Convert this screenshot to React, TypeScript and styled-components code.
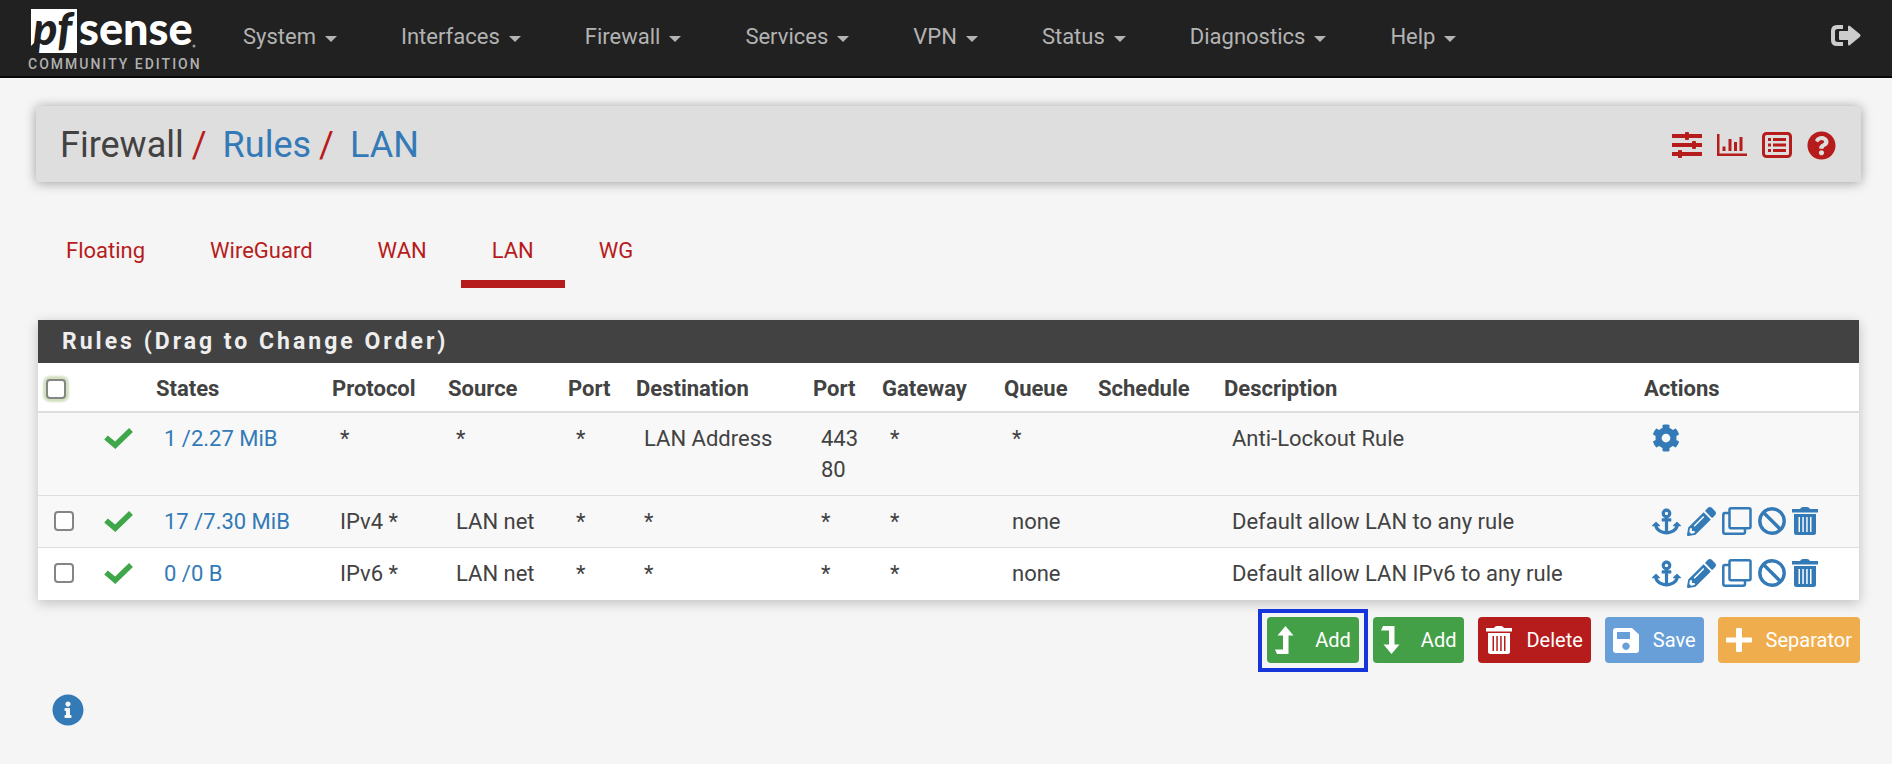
import React from 'react';
import styled, { createGlobalStyle, css } from 'styled-components';
import { FaAnchor, FaCog, FaInfoCircle, FaPencilAlt, FaQuestionCircle } from 'react-icons/fa';

const colors = {
  page: '#f5f5f5',
  nav: '#212121',
  navText: '#b3b3b3',
  red: '#b71c1c',
  blue: '#337ab7',
  green: '#43a047',
  text: '#424242',
  line: '#dddddd',
};

const GlobalStyle = createGlobalStyle`
  *, *::before, *::after { box-sizing: border-box; }
  body {
    margin: 0;
    background: ${colors.page};
    color: ${colors.text};
    font: 400 22px/31px Roboto, "Liberation Sans", sans-serif;
  }
  a { color: ${colors.blue}; text-decoration: none; }
  svg { display: block; flex: none; }
`;

/* ---------- top navigation ---------- */

const Navbar = styled.nav`
  display: flex;
  align-items: flex-start;
  height: 78px;
  padding: 0 31px 0 25px;
  background: ${colors.nav};
  border-bottom: 2px solid #080808;
`;

const Brand = styled.a`
  margin-right: 9px;
`;

const BrandText = styled.text<{ $dark?: boolean }>`
  font: 900 45px Lato, sans-serif;
  font-style: ${p => (p.$dark ? 'italic' : 'normal')};
  fill: ${p => (p.$dark ? colors.nav : '#ffffff')};
`;

const EditionText = styled.text`
  font: 500 14px Roboto, sans-serif;
  letter-spacing: 2px;
  fill: #b0b0b0;
`;

const Menu = styled.ul`
  display: flex;
  flex: 1;
  margin: 0;
  padding: 0;
  list-style: none;
`;

const MenuButton = styled.button`
  display: flex;
  align-items: center;
  gap: 9px;
  padding: 21px 32px 20px;
  border: 0;
  background: none;
  color: ${colors.navText};
  font: inherit;
  cursor: pointer;

  &::after {
    content: '';
    margin-top: 4px;
    border: 6px solid transparent;
    border-top-color: currentColor;
    border-bottom: 0;
  }
`;

const LogoutLink = styled.a`
  padding-top: 25px;
  color: #cccccc;
`;

/* ---------- page heading ---------- */

const Page = styled.main`
  padding: 28px 33px 38px 38px;
`;

const PageHeader = styled.header`
  display: flex;
  align-items: center;
  justify-content: space-between;
  height: 76px;
  margin: 0 -2px;
  padding: 2px 25px 0 24px;
  background: #dedede;
  border-radius: 3px;
  box-shadow: 0 1px 12px rgba(0, 0, 0, 0.36);
`;

const Breadcrumb = styled.ol`
  display: flex;
  margin: 0;
  padding: 0;
  list-style: none;
  font-size: 36px;
  line-height: 44px;

  li + li::before {
    content: '/';
    padding: 0 16px 0 8px;
    color: ${colors.red};
  }
`;

const HeaderTools = styled.div`
  display: flex;
  align-items: center;
  gap: 15px;

  a { color: ${colors.red}; }
`;

/* ---------- tabs ---------- */

const Tabs = styled.nav`
  display: flex;
  gap: 3px;
  margin: 45px 0 32px;
`;

const Tab = styled.a<{ $active?: boolean }>`
  padding: 8px 31px 14px;
  border-bottom: 8px solid ${p => (p.$active ? colors.red : 'transparent')};
  color: ${colors.red};

  &:first-child { padding-left: 28px; }
`;

/* ---------- rules panel ---------- */

const Panel = styled.section`
  background: #ffffff;
  box-shadow: 0 3px 12px rgba(0, 0, 0, 0.22);
`;

const PanelTitle = styled.h2`
  margin: 0;
  padding: 6px 24px;
  background: ${colors.text};
  color: #eeeeee;
  font-size: 23px;
  font-weight: 700;
  letter-spacing: 3px;
`;

const RulesTable = styled.table`
  width: 100%;
  table-layout: fixed;
  border-collapse: separate;
  border-spacing: 0;
`;

const Col = styled.col<{ $width?: number }>`
  width: ${p => (p.$width ? `${p.$width}px` : 'auto')};
`;

const HeadCell = styled.th`
  padding: 10px 0 7px 8px;
  border-bottom: 2px solid ${colors.line};
  font-weight: 700;
  text-align: left;
  white-space: nowrap;
`;

const Row = styled.tr<{ $shaded?: boolean }>`
  background: ${p => (p.$shaded ? '#f8f8f8' : '#ffffff')};

  td { border-bottom: 1px solid ${colors.line}; }
  &:last-child td { border-bottom-color: transparent; }
`;

const Cell = styled.td`
  padding: 10px 0 10px 16px;
  vertical-align: top;
  white-space: nowrap;
`;

const CellLine = styled.div`
  display: flex;
  align-items: center;
  gap: 6px;
  height: 30px;
`;

const Checkbox = styled.input<{ $glow?: boolean }>`
  display: block;
  appearance: none;
  width: 20px;
  height: 20px;
  margin: 0;
  border: 2px solid #858585;
  border-radius: 4px;
  background: #ffffff;

  ${p => p.$glow && css`
    box-shadow: 0 0 2px 3px #d3e0c0;
  `}

  &:checked { background: ${colors.blue}; }
`;

/* ---------- buttons under the table ---------- */

const ButtonBar = styled.div`
  display: flex;
  justify-content: flex-end;
  gap: 14px;
  margin: 17px -1px 31px 0;
`;

const ActionButton = styled.button<{ $color: string; $marked?: boolean }>`
  position: relative;
  display: flex;
  align-items: center;
  gap: 14px;
  height: 46px;
  padding: 0 8px;
  border: 0;
  border-radius: 4px;
  background: ${p => p.$color};
  color: #ffffff;
  font: 400 20px/28px Roboto, "Liberation Sans", sans-serif;
  cursor: pointer;

  ${p => p.$marked && css`
    &::after {
      content: '';
      position: absolute;
      inset: -8px -9px -9px;
      border: 4px solid #1636dc;
    }
  `}
`;

const InfoButton = styled.button`
  display: block;
  margin-left: 14px;
  padding: 0;
  border: 0;
  background: none;
  color: ${colors.blue};
  cursor: pointer;
`;

/* ---------- icons ---------- */

const Logo = () => (
  <svg width="177" height="76" viewBox="0 0 177 76" role="img" aria-label="pfSense community edition">
    <path d="M6 9H52V53H11L14 38L6 46Z" fill="#ffffff" />
    <BrandText $dark x="8" y="45">pf</BrandText>
    <BrandText x="54" y="45">sense</BrandText>
    <circle cx="169" cy="46" r="1.5" fill="#999999" />
    <EditionText x="3" y="69">COMMUNITY EDITION</EditionText>
  </svg>
);

const SignOutIcon = () => (
  <svg width="30" height="21" viewBox="0 0 30 21" fill="currentColor">
    <path d="M12 0v4H6.500Q4 4 4 6.500v8Q4 17 6.500 17H12v4H6Q0 21 0 15V6Q0 0 6 0z" />
    <path d="M9 6h8V2Q17 -.5 19 1l10 8.300q1 1.200 0 2.400L19 20Q17 21.500 17 19V15H9Q8 15 8 14V7Q8 6 9 6z" />
  </svg>
);

const SlidersIcon = () => (
  <svg width="30" height="26" viewBox="0 0 30 26" fill="currentColor">
    <path d="M0 2h30v4H0zM0 11h30v4H0zM0 20h30v4H0z" />
    <rect x="13" y="0" width="4" height="8" rx="1" />
    <rect x="20" y="9" width="4" height="8" rx="1" />
    <rect x="6" y="18" width="4" height="8" rx="1" />
  </svg>
);

const ChartIcon = () => (
  <svg width="30" height="22" viewBox="0 0 30 22" fill="currentColor">
    <path d="M0 0h2.500v19.500H30V22H0zM5.500 12.500h3V17h-3zM11.500 5h3v12h-3zM17 8h3v9h-3zM22.500 3h3v14h-3z" />
  </svg>
);

const ListIcon = () => (
  <svg width="30" height="26" viewBox="0 0 30 26">
    <rect x="1.500" y="1.500" width="27" height="23" rx="3" fill="none" stroke="currentColor" strokeWidth="3" />
    <path d="M6 6h3v3H6zM6 11.500h3v3H6zM6 17h3v3H6zM11 6h13v3H11zM11 11.500h13v3H11zM11 17h13v3H11z" fill="currentColor" />
  </svg>
);

const CheckIcon = () => (
  <svg width="29" height="21" viewBox="0 0 29 21" role="img" aria-label="pass">
    <path d="M2 9.500L11.200 17.200L27 2" fill="none" stroke="#3fa64a" strokeWidth="5.500" />
  </svg>
);

const CloneIcon = () => (
  <svg width="30" height="28" viewBox="0 0 30 28" fill="none" stroke="currentColor" strokeWidth="2.500">
    <rect x="7.500" y="1.300" width="21" height="20" rx="1.500" />
    <path d="M7.500 6H3Q1.300 6 1.300 8V25Q1.300 26.700 3 26.700H21Q23 26.700 23 25V21.500" />
  </svg>
);

const BanIcon = () => (
  <svg width="28" height="28" viewBox="0 0 28 28" fill="none" stroke="currentColor" strokeWidth="3.400">
    <circle cx="14" cy="14" r="12.200" />
    <path d="M5.500 5.500L22.500 22.500" />
  </svg>
);

const TrashIcon = () => (
  <svg width="26" height="28" viewBox="0 0 26 28" fill="currentColor">
    <path d="M0 2H8Q9 0 11 0H15Q17 0 18 2H26V5.500H0z" />
    <path fillRule="evenodd" d="M2 7H24V25.500Q24 28 21.500 28H4.500Q2 28 2 25.500zM6.500 10V25H8V10zM10.300 10V25H11.800V10zM14.200 10V25H15.700V10zM18 10V25H19.500V10z" />
  </svg>
);

const LevelUpIcon = () => (
  <svg width="26" height="28" viewBox="0 0 26 28" fill="currentColor">
    <path d="M10.500 0L18.500 9.500H13.500V28H2L0 23.500H8V9.500H2.500z" />
  </svg>
);

const LevelDownIcon = () => (
  <svg width="26" height="28" viewBox="0 0 26 28" fill="currentColor">
    <path d="M10.500 28L18.500 18.500H13.500V0H2L0 4.500H8V18.500H2.500z" />
  </svg>
);

const SaveIcon = () => (
  <svg width="26" height="25" viewBox="0 0 26 25" fill="currentColor">
    <path fillRule="evenodd" d="M3 0H19L26 6.500V22Q26 25 23 25H3Q0 25 0 22V3Q0 0 3 0zM4 4V11H17V4zM13 14.500A3.700 3.700 0 1 0 13.010 14.500z" />
  </svg>
);

const PlusIcon = () => (
  <svg width="26" height="26" viewBox="0 0 26 26" fill="currentColor">
    <path d="M11 1h4q1 0 1 1v8.500h9q1 0 1 1v3q0 1-1 1h-9V24q0 1-1 1h-4q-1 0-1-1v-8.500H1q-1 0-1-1v-3q0-1 1-1h9V2q0-1 1-1z" />
  </svg>
);

/* ---------- data ---------- */

const menuItems = ['System', 'Interfaces', 'Firewall', 'Services', 'VPN', 'Status', 'Diagnostics', 'Help'];
const tabs = ['Floating', 'WireGuard', 'WAN', 'LAN', 'WG'];
const headings = ['States', 'Protocol', 'Source', 'Port', 'Destination', 'Port', 'Gateway', 'Queue', 'Schedule', 'Description', 'Actions'];
const columnWidths = [50, 60, 176, 116, 120, 68, 177, 69, 122, 94, 126, undefined, 223];

interface Rule {
  states: string;
  fields: string[][];
  fixed?: boolean;
  shaded?: boolean;
}

const rules: Rule[] = [
  {
    states: '1 /2.27 MiB',
    fields: [['*'], ['*'], ['*'], ['LAN Address'], ['443', '80'], ['*'], ['*'], [], ['Anti-Lockout Rule']],
    fixed: true,
    shaded: true,
  },
  {
    states: '17 /7.30 MiB',
    fields: [['IPv4 *'], ['LAN net'], ['*'], ['*'], ['*'], ['*'], ['none'], [], ['Default allow LAN to any rule']],
    shaded: true,
  },
  {
    states: '0 /0 B',
    fields: [['IPv6 *'], ['LAN net'], ['*'], ['*'], ['*'], ['*'], ['none'], [], ['Default allow LAN IPv6 to any rule']],
  },
];

const RuleActions = ({ fixed }: { fixed?: boolean }) => (
  <CellLine>
    {fixed ? (
      <a href="#settings" aria-label="Settings"><FaCog size={28} /></a>
    ) : (
      <>
        <a href="#toggle" aria-label="Move"><FaAnchor size={29} /></a>
        <a href="#edit" aria-label="Edit"><FaPencilAlt size={29} /></a>
        <a href="#copy" aria-label="Copy"><CloneIcon /></a>
        <a href="#disable" aria-label="Disable"><BanIcon /></a>
        <a href="#delete" aria-label="Delete"><TrashIcon /></a>
      </>
    )}
  </CellLine>
);

export default function App() {
  return (
    <>
      <GlobalStyle />
      <Navbar>
        <Brand href="#home"><Logo /></Brand>
        <Menu>
          {menuItems.map(item => (
            <li key={item}><MenuButton type="button">{item}</MenuButton></li>
          ))}
        </Menu>
        <LogoutLink href="#logout" aria-label="Log out"><SignOutIcon /></LogoutLink>
      </Navbar>

      <Page>
        <PageHeader>
          <Breadcrumb>
            <li>Firewall</li>
            <li><a href="#rules">Rules</a></li>
            <li><a href="#lan">LAN</a></li>
          </Breadcrumb>
          <HeaderTools>
            <a href="#advanced" aria-label="Settings"><SlidersIcon /></a>
            <a href="#graph" aria-label="Status"><ChartIcon /></a>
            <a href="#log" aria-label="Log"><ListIcon /></a>
            <a href="#help" aria-label="Help"><FaQuestionCircle size={29} /></a>
          </HeaderTools>
        </PageHeader>

        <Tabs>
          {tabs.map(tab => (
            <Tab key={tab} href={`#${tab}`} $active={tab === 'LAN'}>{tab}</Tab>
          ))}
        </Tabs>

        <Panel>
          <PanelTitle>Rules (Drag to Change Order)</PanelTitle>
          <RulesTable>
            <colgroup>
              {columnWidths.map((width, i) => <Col key={i} $width={width} />)}
            </colgroup>
            <thead>
              <tr>
                <HeadCell><Checkbox type="checkbox" aria-label="Select all rules" $glow /></HeadCell>
                <HeadCell />
                {headings.map((heading, i) => <HeadCell key={i}>{heading}</HeadCell>)}
              </tr>
            </thead>
            <tbody>
              {rules.map(rule => (
                <Row key={rule.states} $shaded={rule.shaded}>
                  <Cell>
                    {!rule.fixed && (
                      <CellLine><Checkbox type="checkbox" aria-label={`Select rule ${rule.states}`} /></CellLine>
                    )}
                  </Cell>
                  <Cell><CellLine><CheckIcon /></CellLine></Cell>
                  <Cell><a href="#states">{rule.states}</a></Cell>
                  {rule.fields.map((lines, i) => (
                    <Cell key={i}>{lines.map(line => <div key={line}>{line}</div>)}</Cell>
                  ))}
                  <Cell><RuleActions fixed={rule.fixed} /></Cell>
                </Row>
              ))}
            </tbody>
          </RulesTable>
        </Panel>

        <ButtonBar>
          <ActionButton type="button" $color={colors.green} $marked><LevelUpIcon />Add</ActionButton>
          <ActionButton type="button" $color={colors.green}><LevelDownIcon />Add</ActionButton>
          <ActionButton type="button" $color={colors.red}><TrashIcon />Delete</ActionButton>
          <ActionButton type="button" $color="#689fd9"><SaveIcon />Save</ActionButton>
          <ActionButton type="button" $color="#f0ad4e"><PlusIcon />Separator</ActionButton>
        </ButtonBar>

        <InfoButton type="button" aria-label="Information"><FaInfoCircle size={32} /></InfoButton>
      </Page>
    </>
  );
}
